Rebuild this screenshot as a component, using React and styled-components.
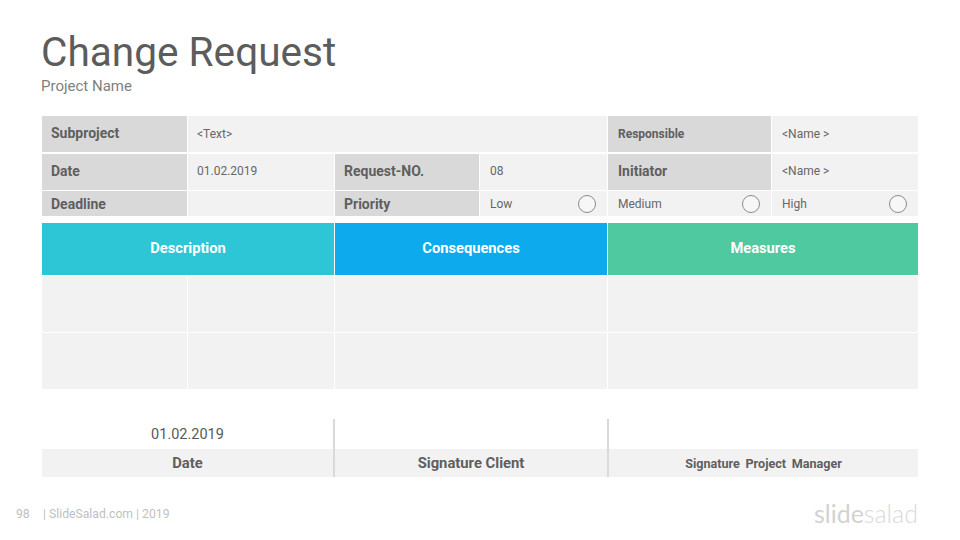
import React from "react"
import styled, { createGlobalStyle } from "styled-components"

const COLUMNS = "145px 146px 144px 127px 163px 146px"

const GlobalStyle = createGlobalStyle`
  html, body {
    margin: 0;
    background: #fff;
  }
  body {
    font-family: Roboto, "Liberation Sans", sans-serif;
    color: #595959;
  }
`

const Slide = styled.div`
  width: 960px;
  height: 540px;
  overflow: hidden;
  display: flex;
  flex-direction: column;
  box-sizing: border-box;
  padding-top: 28px;
`

const Header = styled.header`
  padding-left: 41px;
  height: 88px;
`

const Title = styled.h1`
  margin: 0;
  font-size: 40.6px;
  line-height: 48px;
  font-weight: 400;
  color: #5c5c5c;
`

const Subtitle = styled.div`
  font-size: 15px;
  line-height: 20px;
  color: #7f7f7f;
`

const Sheet = styled.div`
  margin-left: 42px;
  width: 876px;
  display: flex;
  flex-direction: column;
`

const InfoGrid = styled.div`
  display: grid;
  grid-template-columns: ${COLUMNS};
  grid-template-rows: 36px 36px 25px;
  gap: 1.5px 1px;
`

const Cell = styled.div`
  grid-column: span ${(p) => p.$span || 1};
  display: flex;
  align-items: center;
  justify-content: space-between;
  padding: 0 11px ${(p) => p.$lift || 0}px ${(p) => (p.$right ? 10 : 9)}px;
  background: #f2f2f2;
  font-size: 12px;
  color: #666;
`

const Label = styled(Cell)`
  background: #d9d9d9;
  font-size: ${(p) => p.$size || 14}px;
  font-weight: 700;
  color: #5f5f5f;
`

const Radio = styled.span`
  width: 18px;
  height: 18px;
  box-sizing: border-box;
  border: 1px solid #8c8c8c;
  border-radius: 50%;
  background: #f7f7f7;
`

const BandGrid = styled.div`
  display: grid;
  grid-template-columns: ${COLUMNS};
  grid-template-rows: 52px 56px 56px;
  gap: 1px;
  margin-top: 7px;
`

const Band = styled.div`
  grid-column: span 2;
  display: flex;
  align-items: center;
  justify-content: center;
  padding-bottom: 3px;
  background: ${(p) => p.$color};
  color: #fff;
  font-size: 14.7px;
  font-weight: 700;
`

const BlankCell = styled.div`
  grid-column: span ${(p) => p.$span || 1};
  background: #f2f2f2;
`

const SignGrid = styled.div`
  display: grid;
  grid-template-columns: 291px 274px 311px;
  grid-template-rows: 30px 28px;
  margin-top: 30px;
`

const SignValue = styled.div`
  display: flex;
  align-items: center;
  justify-content: center;
  padding-top: 1px;
  font-size: 14.5px;
  color: #595959;
  border-left: ${(p) => (p.$divider ? "2px solid #d9d9d9" : "none")};
`

const SignLabel = styled.div`
  display: flex;
  align-items: center;
  justify-content: center;
  background: #f2f2f2;
  font-size: ${(p) => p.$size || 14.8}px;
  font-weight: 700;
  word-spacing: ${(p) => p.$wordGap || 0}px;
  color: #5f5f5f;
  border-left: ${(p) => (p.$divider ? "2px solid #d9d9d9" : "none")};
`

const Footer = styled.footer`
  margin-top: 23px;
  height: 28px;
  display: flex;
  align-items: center;
  padding: 0 42px 0 16px;
  font-size: 12.2px;
  color: #bfbfbf;
`

const PageNumber = styled.span`
  width: 27px;
`

const Brand = styled.div`
  margin-left: auto;
  padding-bottom: 2px;
  font-family: Lato, "Open Sans", sans-serif;
  font-size: 25px;
  color: #d9d9d9;
  font-weight: 300;
`

const BrandStrong = styled.span`
  font-weight: 400;
  color: #d2d2d2;
`

const App = () => (
  <>
    <GlobalStyle />
    <Slide>
      <Header>
        <Title>Change Request</Title>
        <Subtitle>Project Name</Subtitle>
      </Header>
      <Sheet>
        <InfoGrid>
          <Label $lift={2}>Subproject</Label>
          <Cell $span={3}>&lt;Text&gt;</Cell>
          <Label $right $size={12}>Responsible</Label>
          <Cell $right>&lt;Name &gt;</Cell>

          <Label $lift={1}>Date</Label>
          <Cell $lift={1}>01.02.2019</Cell>
          <Label $lift={1}>Request-NO.</Label>
          <Cell $right $lift={1}>08</Cell>
          <Label $right $lift={1}>Initiator</Label>
          <Cell $right $lift={1}>&lt;Name &gt;</Cell>

          <Label>Deadline</Label>
          <Cell />
          <Label>Priority</Label>
          <Cell $right>
            Low
            <Radio />
          </Cell>
          <Cell $right>
            Medium
            <Radio />
          </Cell>
          <Cell $right>
            High
            <Radio />
          </Cell>
        </InfoGrid>
        <BandGrid>
          <Band $color="#2dc6d6">Description</Band>
          <Band $color="#0daaee">Consequences</Band>
          <Band $color="#4ec9a0">Measures</Band>
          <BlankCell />
          <BlankCell />
          <BlankCell $span={2} />
          <BlankCell $span={2} />
          <BlankCell />
          <BlankCell />
          <BlankCell $span={2} />
          <BlankCell $span={2} />
        </BandGrid>
        <SignGrid>
          <SignValue>01.02.2019</SignValue>
          <SignValue $divider />
          <SignValue $divider />
          <SignLabel>Date</SignLabel>
          <SignLabel $divider>Signature Client</SignLabel>
          <SignLabel $divider $size={12.6} $wordGap={2.5}>
            Signature Project Manager
          </SignLabel>
        </SignGrid>
      </Sheet>
      <Footer>
        <PageNumber>98</PageNumber>
        <span>| SlideSalad.com | 2019</span>
        <Brand>
          <BrandStrong>slide</BrandStrong>salad
        </Brand>
      </Footer>
    </Slide>
  </>
)

export default App
